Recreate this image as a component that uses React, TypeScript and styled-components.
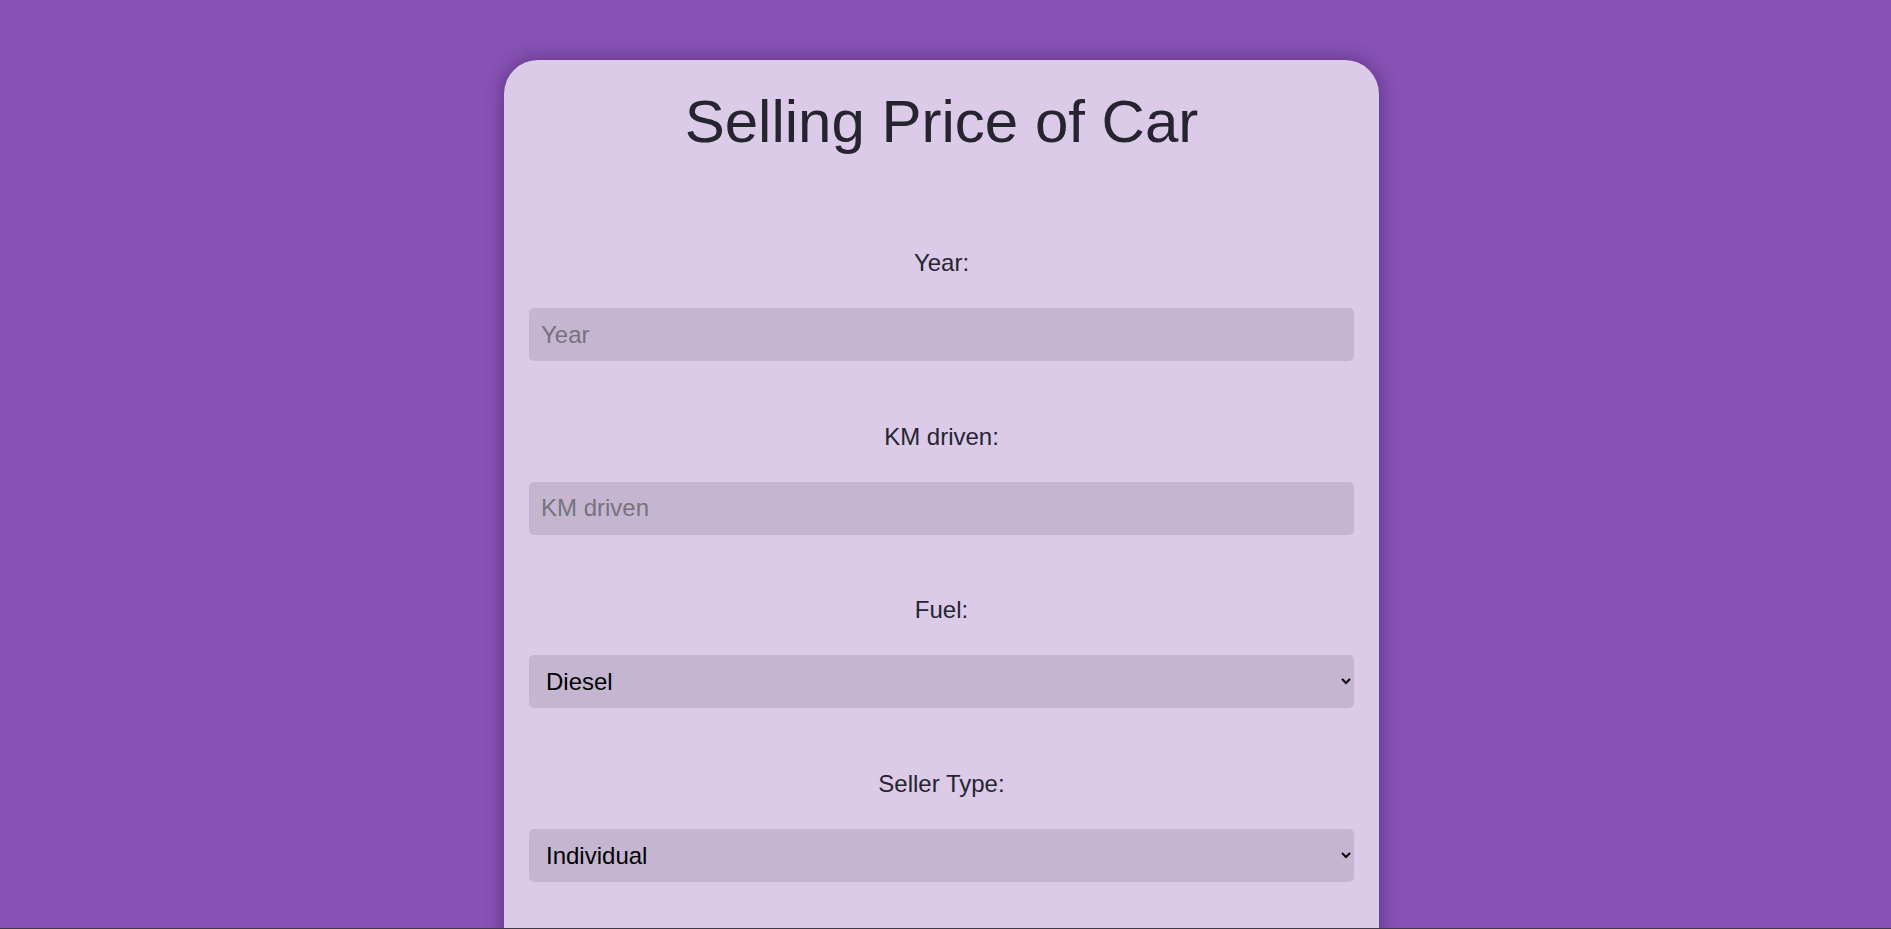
import React from "react";
import styled, { createGlobalStyle } from "styled-components";

const GlobalStyle = createGlobalStyle`
  html, body {
    margin: 0;
    padding: 0;
    background: #8652b5;
    font-family: "Liberation Sans", Arial, sans-serif;
    overflow: hidden;
  }
  * { box-sizing: border-box; }
`;

const Page = styled.div`
  min-height: 100vh;
  display: flex;
  justify-content: center;
  padding: 60px 8px 40px 0;
`;

const Card = styled.div`
  width: 875px;
  background: #dbcbe9;
  border-radius: 34px;
  box-shadow: 0 0 18px rgba(40, 10, 70, 0.45);
  padding: 27px 25px 40px;
  display: flex;
  flex-direction: column;
`;

const Title = styled.h1`
  margin: 0;
  font-size: 60px;
  font-weight: 400;
  line-height: normal;
  color: #25242f;
  text-align: center;
`;

const Form = styled.form`
  margin-top: 93px;
  display: flex;
  flex-direction: column;
  gap: 61.7px;
`;

const Field = styled.div`
  display: flex;
  flex-direction: column;
  gap: 31px;
`;

const Label = styled.label`
  font-size: 24px;
  line-height: normal;
  color: #27252f;
  text-align: center;
`;

const TextInput = styled.input`
  height: 53px;
  width: 100%;
  border: none;
  border-radius: 5px;
  background: #c4b6d0;
  padding: 0 12px;
  font-family: "Liberation Sans", Arial, sans-serif;
  font-size: 24px;
  color: #111;
  outline: none;
  &::placeholder {
    color: #77727c;
  }
`;

const Select = styled.select`
  height: 53px;
  width: 100%;
  border: none;
  border-radius: 5px;
  background: #c4b6d0;
  padding: 0 18px 0 13px;
  font-family: "Liberation Sans", Arial, sans-serif;
  font-size: 24px;
  color: #000;
  outline: none;
`;

const SubmitButton = styled.button`
  height: 53px;
  border: none;
  border-radius: 5px;
  background: #8652b5;
  color: #fff;
  font-family: "Liberation Sans", Arial, sans-serif;
  font-size: 24px;
`;

const BottomEdge = styled.div`
  position: fixed;
  left: 0;
  right: 0;
  bottom: 0;
  height: 1px;
  background: #3d3846;
`;

type FieldDef =
  | { kind: "input"; id: string; label: string; placeholder: string }
  | { kind: "select"; id: string; label: string; options: string[] };

const fields: FieldDef[] = [
  { kind: "input", id: "year", label: "Year:", placeholder: "Year" },
  { kind: "input", id: "km", label: "KM driven:", placeholder: "KM driven" },
  { kind: "select", id: "fuel", label: "Fuel:", options: ["Diesel", "Petrol", "CNG", "LPG", "Electric"] },
  { kind: "select", id: "seller", label: "Seller Type:", options: ["Individual", "Dealer", "Trustmark Dealer"] },
  { kind: "select", id: "transmission", label: "Transmission:", options: ["Manual", "Automatic"] },
  { kind: "select", id: "owner", label: "Owner:", options: ["First Owner", "Second Owner", "Third Owner"] },
];

export default function App() {
  return (
    <>
      <GlobalStyle />
      <Page>
        <Card>
          <Title>Selling Price of Car</Title>
          <Form onSubmit={(e) => e.preventDefault()}>
            {fields.map((f) => (
              <Field key={f.id}>
                <Label htmlFor={f.id}>{f.label}</Label>
                {f.kind === "input" ? (
                  <TextInput id={f.id} type="text" placeholder={f.placeholder} />
                ) : (
                  <Select id={f.id} defaultValue={f.options[0]}>
                    {f.options.map((o) => (
                      <option key={o} value={o}>
                        {o}
                      </option>
                    ))}
                  </Select>
                )}
              </Field>
            ))}
            <SubmitButton type="submit">Predict</SubmitButton>
          </Form>
        </Card>
      </Page>
      <BottomEdge />
    </>
  );
}
